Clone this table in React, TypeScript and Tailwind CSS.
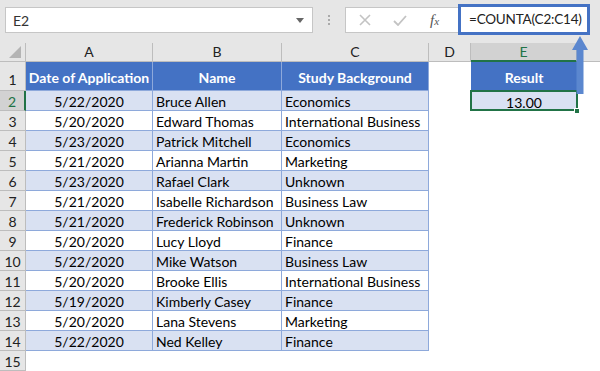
const rows: [string, string, string][] = [
  ["5/22/2020", "Bruce Allen", "Economics"],
  ["5/20/2020", "Edward Thomas", "International Business"],
  ["5/23/2020", "Patrick Mitchell", "Economics"],
  ["5/21/2020", "Arianna Martin", "Marketing"],
  ["5/23/2020", "Rafael Clark", "Unknown"],
  ["5/21/2020", "Isabelle Richardson", "Business Law"],
  ["5/21/2020", "Frederick Robinson", "Unknown"],
  ["5/20/2020", "Lucy Lloyd", "Finance"],
  ["5/22/2020", "Mike Watson", "Business Law"],
  ["5/20/2020", "Brooke Ellis", "International Business"],
  ["5/19/2020", "Kimberly Casey", "Finance"],
  ["5/20/2020", "Lana Stevens", "Marketing"],
  ["5/22/2020", "Ned Kelley", "Finance"],
];

const font = { fontFamily: "Lato, 'Liberation Sans', sans-serif" };

function FormulaBar() {
  return (
    <div className="flex h-[43px] items-start bg-[#e6e6e6] pl-[5px] pt-[7px]">
      <div className="flex h-[26px] w-[308px] items-center justify-between border border-[#c6c6c6] bg-white pl-[7px] pr-[8px] text-[14px] text-[#333]">
        <span>E2</span>
        <svg width="8" height="5" viewBox="0 0 8 5">
          <path d="M0 0h8L4 5z" fill="#666" />
        </svg>
      </div>
      <div className="flex h-[26px] w-[32px] flex-col items-center justify-center gap-[2px]">
        <span className="h-[2px] w-[2px] bg-[#aaa]" />
        <span className="h-[2px] w-[2px] bg-[#aaa]" />
        <span className="h-[2px] w-[2px] bg-[#aaa]" />
      </div>
      <div className="flex h-[26px] flex-1 items-center border-y border-l border-[#c6c6c6] bg-white">
        <div className="flex w-[112px] items-center">
          <svg className="ml-[13px]" width="12" height="12" viewBox="0 0 12 12">
            <path d="M1 1l10 10M11 1L1 11" stroke="#c3c3c3" strokeWidth="1.6" />
          </svg>
          <svg className="ml-[22px]" width="14" height="11" viewBox="0 0 14 11">
            <path d="M1 6l4 4 8-9" stroke="#c3c3c3" strokeWidth="1.8" fill="none" />
          </svg>
          <span
            className="ml-[23px] text-[15px] italic text-[#555]"
            style={{ fontFamily: "'Liberation Serif', serif" }}
          >
            f<span className="text-[11px]">x</span>
          </span>
        </div>
        <div className="-mt-[1px] flex h-[31px] w-[132px] items-center whitespace-nowrap border-[3px] border-[#4472c4] bg-white pl-[8px] text-[13.5px] tracking-[-0.2px] text-[#222]">
          =COUNTA(C2:C14)
        </div>
        <div className="h-[26px] flex-1 bg-[#e6e6e6]" />
      </div>
    </div>
  );
}

export default function App() {
  const colHead =
    "flex h-[19px] items-center justify-center border-r border-b border-[#bdbdbd] bg-[#e6e6e6] text-[14px] leading-[18px] text-[#222]";
  const rowHead =
    "flex h-[20px] items-center justify-center border-r border-b border-[#bdbdbd] bg-[#e6e6e6] pt-[2px] text-[14px] leading-[17px] text-[#222]";
  const cell =
    "flex h-[20px] items-center whitespace-nowrap border-r border-b border-[#8ea9db] pt-[2px] text-[14px] leading-[17px] text-black";
  return (
    <div className="relative h-[371px] w-[600px] overflow-hidden bg-white" style={font}>
      <FormulaBar />
      <div className="grid grid-cols-[26px_127px_129px_147px_42px_106px_1fr]">
        <div className="flex h-[19px] items-end justify-end border-r border-b border-[#bdbdbd] bg-[#e6e6e6] pb-[3px] pr-[4px]">
          <svg width="12" height="12" viewBox="0 0 12 12">
            <path d="M12 0v12H0z" fill="#b4b4b4" />
          </svg>
        </div>
        <div className={colHead}>A</div>
        <div className={colHead}>B</div>
        <div className={colHead}>C</div>
        <div className={colHead}>D</div>
        <div className="flex h-[19px] items-center justify-center border-r border-b-2 border-r-[#bdbdbd] border-b-[#217346] bg-[#d2d2d2] text-[14px] leading-[18px] text-[#217346]">
          E
        </div>
        <div className="h-[19px] border-b border-[#bdbdbd] bg-[#e6e6e6]" />

        <div className="flex h-[29px] items-end justify-center border-r border-b border-[#bdbdbd] bg-[#e6e6e6] pb-[2px] text-[14px] leading-[17px] text-[#222]">
          1
        </div>
        {["Date of Application", "Name", "Study Background"].map((h) => (
          <div
            key={h}
            className="flex h-[29px] items-center justify-center whitespace-nowrap border-r border-b border-[#8ea9db] bg-[#4472c4] pt-[2px] text-[14px] font-bold leading-[17px] text-white"
          >
            {h}
          </div>
        ))}
        <div className="h-[29px]" />
        <div className="flex h-[29px] items-center justify-center bg-[#4472c4] pt-[2px] text-[14px] font-bold leading-[17px] text-white">
          Result
        </div>
        <div className="h-[29px]" />

        {rows.map((r, i) => {
          const n = i + 2;
          const fill = i % 2 === 0 ? "bg-[#d9e1f2]" : "bg-white";
          return [
            <div
              key={`h${n}`}
              className={
                n === 2
                  ? "flex h-[20px] items-center justify-center border-r-2 border-b border-r-[#217346] border-b-[#bdbdbd] bg-[#d2d2d2] pt-[2px] text-[14px] leading-[17px] text-[#217346]"
                  : rowHead
              }
            >
              {n}
            </div>,
            <div key={`a${n}`} className={`${cell} ${fill} justify-center`}>
              {r[0]}
            </div>,
            <div key={`b${n}`} className={`${cell} ${fill} pl-[3px]`}>
              {r[1]}
            </div>,
            <div key={`c${n}`} className={`${cell} ${fill} pl-[3px]`}>
              {r[2]}
            </div>,
            <div key={`d${n}`} className="h-[20px]" />,
            n === 2 ? (
              <div
                key="e2"
                className="relative flex h-[20px] items-center justify-center bg-[#d9e1f2] pt-[2px] text-[14px] leading-[17px] text-black"
              >
                13.00
                <div className="absolute -inset-x-[1px] -top-[1px] bottom-0 border-2 border-[#217346]" />
                <div className="absolute -bottom-[3px] -right-[3px] h-[6px] w-[6px] border border-white bg-[#217346]" />
              </div>
            ) : (
              <div key={`e${n}`} className="h-[20px]" />
            ),
            <div key={`f${n}`} className="h-[20px]" />,
          ];
        })}
        <div className={rowHead}>15</div>
      </div>

      <svg className="absolute left-[571px] top-[36px]" width="18" height="58" viewBox="0 0 18 58">
        <path d="M9 0L17 14H12.5V58H5.5V14H1z" fill="#5b87cf" />
      </svg>
    </div>
  );
}
